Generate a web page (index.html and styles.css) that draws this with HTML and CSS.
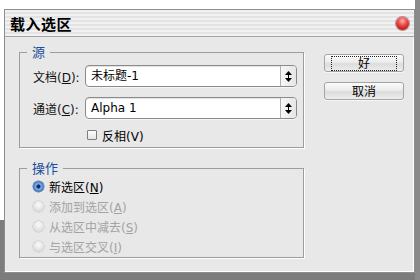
FILE: index.html
```html
<!DOCTYPE html>
<html lang="zh">
<head>
<meta charset="utf-8">
<title>载入选区</title>
<link rel="stylesheet" href="styles.css">
</head>
<body>
<div class="dialog">
  <div class="titlebar">
    <span class="title">载入选区</span>
    <span class="close"></span>
  </div>
  <div class="content">
    <div class="main">
      <fieldset class="group src">
        <legend>源</legend>
        <div class="row">
          <span class="label">文档(<u>D</u>):</span>
          <div class="select"><span class="val">未标题-1</span><span class="arrows"><svg width="7" height="11" viewBox="0 0 7 11"><polygon points="3.5,0 7,4 0,4" fill="#000"/><rect x="3" y="4" width="1" height="3" fill="#000"/><polygon points="0,7 7,7 3.5,11" fill="#000"/></svg></span></div>
        </div>
        <div class="row">
          <span class="label">通道(<u>C</u>):</span>
          <div class="select"><span class="val">Alpha 1</span><span class="arrows"><svg width="7" height="11" viewBox="0 0 7 11"><polygon points="3.5,0 7,4 0,4" fill="#000"/><rect x="3" y="4" width="1" height="3" fill="#000"/><polygon points="0,7 7,7 3.5,11" fill="#000"/></svg></span></div>
        </div>
        <div class="check"><span class="box"></span><span>反相(V)</span></div>
      </fieldset>
      <fieldset class="group op">
        <legend>操作</legend>
        <div class="radio on"><span class="dot"></span><span>新选区(<u>N</u>)</span></div>
        <div class="radio dis"><span class="dot"></span><span>添加到选区(<u>A</u>)</span></div>
        <div class="radio dis"><span class="dot"></span><span>从选区中减去(<u>S</u>)</span></div>
        <div class="radio dis"><span class="dot"></span><span>与选区交叉(<u>I</u>)</span></div>
      </fieldset>
    </div>
    <div class="buttons">
      <div class="btn focus"><span class="focusring">好</span></div>
      <div class="btn">取消</div>
    </div>
  </div>
</div>
</body>
</html>
```
FILE: styles.css
```css
* { box-sizing: border-box; }
html, body { margin: 0; padding: 0; }
body {
  width: 420px;
  height: 280px;
  overflow: hidden;
  font-family: "DejaVu Sans", "Noto Sans CJK SC", sans-serif;
  font-size: 12px;
  color: #000;
  background:
    linear-gradient(to right, transparent 415px, #8a8a8a 415px),
    linear-gradient(#ffffff 220px, #7c7c7c 220px);
  padding: 9px 5px 0 4px;
}
.dialog {
  width: 411px;
  height: 264px;
  background: #e8e8e8;
  border: 1px solid #8e8e8e;
  box-shadow: inset -1px -1px 0 #fff;
  display: flex;
  flex-direction: column;
}
.titlebar {
  height: 27px;
  flex: none;
  display: flex;
  align-items: center;
  justify-content: space-between;
  padding: 0 5px 0 5px;
  border-bottom: 1px solid #a4a4a4;
  background: repeating-linear-gradient(#f1f1f1 0 2px, #e3e3e3 2px 4px);
}
.title {
  font-family: "Noto Sans CJK SC", sans-serif;
  font-weight: 700;
  font-size: 15px;
  letter-spacing: 0.5px;
  line-height: 18px;
  margin-top: 1px;
}
.close {
  width: 13px;
  height: 13px;
  border-radius: 50%;
  background: radial-gradient(circle at 50% 30%, #ffb9b9 0, #f25353 35%, #c71616 75%, #8a0b0b 100%);
  box-shadow: 0 0 0 1px rgba(110, 40, 40, 0.45);
  margin-top: 1px;
}
.content {
  display: flex;
  padding: 7px 0 0 14px;
}
.main {
  width: 286px;
  flex: none;
}
.group {
  margin: 0;
  width: 285px;
  border: 1px solid #9c9c9c;
  box-shadow: 1px 1px 0 #fff;
  padding: 0 6px 0 13px;
  min-width: 0;
}
.group legend {
  font-family: "Noto Sans CJK SC", sans-serif;
  color: #1b4c9e;
  font-size: 13px;
  line-height: 16px;
  height: 16px;
  padding: 0 5px;
  margin-left: -6px;
}
.src { padding-top: 5px; padding-bottom: 5px; }
.op { margin-top: 12px; padding-bottom: 1px; }
.row {
  display: flex;
  align-items: center;
  height: 22px;
  margin-bottom: 10px;
}
.label {
  width: 52px;
  flex: none;
  color: #111;
}
u { text-decoration: underline; text-underline-offset: 1px; }
.select {
  flex: 1;
  height: 22px;
  display: flex;
  background: #fff;
  border: 1px solid #8a8a8a;
  border-radius: 4px;
  box-shadow: inset 0 1px 1px rgba(0,0,0,0.12), 0 1px 0 #f6f6f6;
  overflow: hidden;
}
.val {
  flex: 1;
  padding-left: 5px;
  line-height: 20px;
}
.arrows {
  width: 16px;
  flex: none;
  border-left: 1px solid #b0b0b0;
  background: linear-gradient(to right, #f7f7f7, #e6e6e6);
  display: flex;
  align-items: center;
  justify-content: center;
}
.check {
  display: flex;
  align-items: center;
  gap: 5px;
  height: 14px;
  margin-top: -1px;
  padding-left: 54px;
}
.box {
  width: 10px;
  height: 10px;
  border: 1px solid #7d7d7d;
  background: linear-gradient(#fdfdfd, #e4e4e4);
  border-radius: 1px;
}
.radio {
  display: flex;
  align-items: center;
  gap: 5px;
  height: 20px;
}
.dot {
  width: 11px;
  height: 11px;
  border-radius: 50%;
  flex: none;
  background: radial-gradient(circle at 50% 35%, #fbfbfb 0, #dcdcdc 70%, #c8c8c8 100%);
  box-shadow: 0 0 0 0.5px #bdbdbd;
}
.radio.on .dot {
  background: radial-gradient(circle at 50% 50%, #0d2e66 0 1.8px, #8fb5e6 2.4px, #5d8fd4 4px, #3b6fb8 5.5px);
  box-shadow: 0 0 0 0.5px #556f95;
}
.radio.dis { color: #a3a3a3; }
.buttons {
  padding: 10px 0 0 19px;
  display: flex;
  flex-direction: column;
  gap: 10px;
}
.btn {
  width: 80px;
  height: 18px;
  border: 1px solid #a4a4a4;
  border-radius: 3px;
  background: linear-gradient(#fbfbfb, #ececec 45%, #dcdcdc 55%, #ededed);
  box-shadow: 0 1px 0 #f7f7f7;
  display: flex;
  align-items: center;
  justify-content: center;
  line-height: 14px;
  font-family: "Noto Sans CJK SC", sans-serif;
}
.focusring {
  width: 66px;
  height: 15px;
  border: 1px dotted #222;
  display: flex;
  align-items: center;
  justify-content: center;
}
```
